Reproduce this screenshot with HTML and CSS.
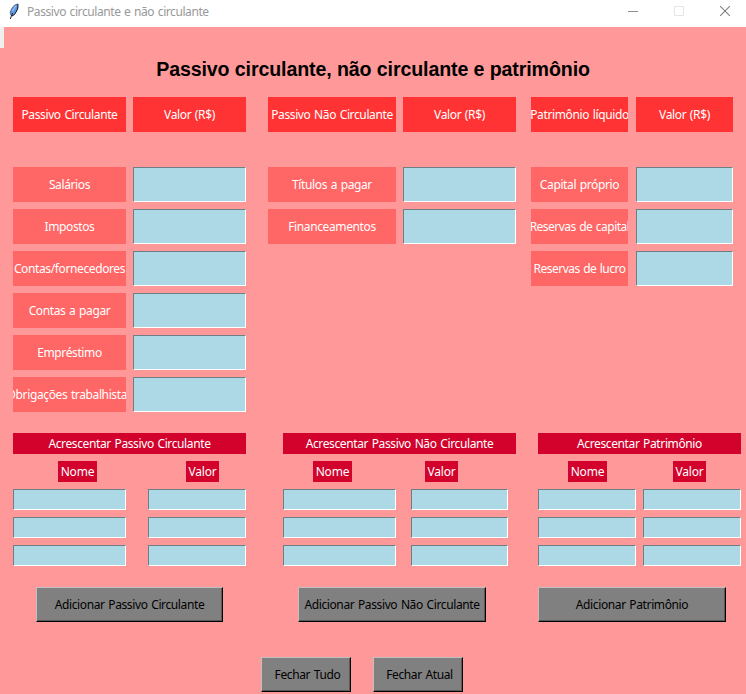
FILE: index.html
```html
<!DOCTYPE html>
<html lang="pt-BR">
<head>
<meta charset="utf-8">
<title>Passivo circulante e não circulante</title>
<link rel="stylesheet" href="styles.css">
</head>
<body>
<header class="titlebar">
  <svg class="feather" width="12" height="18" viewBox="0 0 12 18">
    <path d="M2.500 13.500L2.200 10L4 6L6.500 3.200L9.800 1.800L9.800 6L8.600 9L6.500 12.500L4 14Z" fill="#5b9be8"/>
    <path d="M2.500 12.500L2.200 10L4 6L6.500 3.200L9.800 1.800" fill="none" stroke="#555d68" stroke-width=".8"/>
    <path d="M9.900 2V6L8.600 9L6.500 12.500L4 14" fill="none" stroke="#080c14" stroke-width="1"/>
    <path d="M4.500 11L2.300 17" fill="none" stroke="#111" stroke-width=".9"/>
    <path d="M4.500 9L7.800 4" stroke="#a8ccff" stroke-width="1"/>
  </svg>
  <span class="window-title">Passivo circulante e não circulante</span>
  <div class="controls">
    <svg width="11" height="10" viewBox="0 0 11 10"><path d="M1 5.500H11" stroke="#8e8e8e"/></svg>
    <svg width="10" height="10" viewBox="0 0 10 10"><path d="M.5 .5H9.500V9.500H.5Z" fill="none" stroke="#e5e5e5"/></svg>
    <svg width="10" height="10" viewBox="0 0 10 10"><path d="M0 0L10 10M10 0L0 10" stroke="#808080" stroke-width="1.100"/></svg>
  </div>
</header>
<main class="window">
  <div class="menu-stub"></div>
  <h1>Passivo circulante, não circulante e patrimônio</h1>

  <div class="accounts">
    <section class="table current">
      <div class="head"><span>Passivo Circulante</span></div><div class="head"><span>Valor (R$)</span></div>
      <div class="label"><span>Salários</span></div><input class="field">
      <div class="label"><span>Impostos</span></div><input class="field">
      <div class="label"><span>Contas/fornecedores</span></div><input class="field">
      <div class="label"><span>Contas a pagar</span></div><input class="field">
      <div class="label"><span>Empréstimo</span></div><input class="field">
      <div class="label"><span>Obrigações trabalhistas</span></div><input class="field">
    </section>
    <section class="table noncurrent">
      <div class="head"><span>Passivo Não Circulante</span></div><div class="head"><span>Valor (R$)</span></div>
      <div class="label"><span>Títulos a pagar</span></div><input class="field">
      <div class="label"><span>Financeamentos</span></div><input class="field">
    </section>
    <section class="table equity">
      <div class="head"><span>Patrimônio líquido</span></div><div class="head"><span>Valor (R$)</span></div>
      <div class="label"><span>Capital próprio</span></div><input class="field">
      <div class="label tight"><span>Reservas de capital</span></div><input class="field">
      <div class="label tight"><span>Reservas de lucro</span></div><input class="field">
    </section>
  </div>

  <div class="additions">
    <section class="extra extra-current">
      <h2>Acrescentar Passivo Circulante</h2>
      <div class="tags"><span class="tag">Nome</span><span class="tag">Valor</span></div>
      <div class="entries">
        <input class="field"><input class="field">
        <input class="field"><input class="field">
        <input class="field"><input class="field">
      </div>
      <button class="btn add">Adicionar Passivo Circulante</button>
    </section>
    <section class="extra extra-noncurrent">
      <h2>Acrescentar Passivo Não Circulante</h2>
      <div class="tags"><span class="tag">Nome</span><span class="tag">Valor</span></div>
      <div class="entries">
        <input class="field"><input class="field">
        <input class="field"><input class="field">
        <input class="field"><input class="field">
      </div>
      <button class="btn add">Adicionar Passivo Não Circulante</button>
    </section>
    <section class="extra extra-equity">
      <h2>Acrescentar Patrimônio</h2>
      <div class="tags"><span class="tag">Nome</span><span class="tag">Valor</span></div>
      <div class="entries">
        <input class="field"><input class="field">
        <input class="field"><input class="field">
        <input class="field"><input class="field">
      </div>
      <button class="btn add">Adicionar Patrimônio</button>
    </section>
  </div>

  <footer class="actions">
    <button class="btn close">Fechar Tudo</button>
    <button class="btn close">Fechar Atual</button>
  </footer>
</main>
</body>
</html>
```
FILE: styles.css
```css
* { box-sizing: border-box; }
body {
  margin: 0;
  width: 746px;
  height: 694px;
  overflow: hidden;
  background: #ff9999;
  font: 12px/16px "Noto Sans", "Open Sans", sans-serif;
  letter-spacing: -0.38px;
  word-spacing: 0.9px;
}
.titlebar {
  display: flex;
  align-items: center;
  height: 27px;
  padding: 0 16px 5px 8px;
  background: #fff;
  color: #999;
}
.window-title { padding-top: 2px; letter-spacing: -0.42px; }
.feather { margin-right: 7px; }
.controls { display: flex; gap: 36px; margin-left: auto; }
.controls svg { display: block; }
.window { position: relative; height: 667px; padding-top: 30px; }
.menu-stub { position: absolute; left: 0; top: 0; width: 4px; height: 21px; background: #f0f0f0; }
h1 {
  margin: 0;
  height: 24px;
  text-align: center;
  font: bold 19.6px/24px "Liberation Sans", Arial, sans-serif;
  letter-spacing: -0.11px;
  word-spacing: 0;
}
.accounts {
  display: flex;
  align-items: flex-start;
  height: 336px;
  padding: 16px 0 0 13px;
}
.table { display: grid; grid-template-rows: 63px; grid-auto-rows: 35px; gap: 7px; }
.current { grid-template-columns: 113px 113px; }
.noncurrent { grid-template-columns: 128px 113px; margin-left: 22px; }
.equity { grid-template-columns: 97px 97px; column-gap: 8px; margin-left: 15px; }
.head, .label {
  display: flex;
  align-items: center;
  justify-content: center;
  height: 35px;
  overflow: hidden;
  white-space: nowrap;
  color: #fff;
}
.head { background: #ff3333; }
.label { background: #ff6666; }
.tight { letter-spacing: -0.52px; }
.field {
  display: block;
  width: 100%;
  height: 100%;
  min-width: 0;
  margin: 0;
  padding: 0 2px;
  border: 1px solid;
  border-color: #6b7f85 #fff #fff #6b7f85;
  border-radius: 0;
  background: #add8e6;
  font: inherit;
}
.additions { display: flex; align-items: flex-start; padding: 16px 0 0 13px; }
.extra { display: flex; flex-direction: column; width: 233px; }
.extra-noncurrent { margin-left: 37px; }
.extra-equity { width: 203px; margin-left: 22px; }
h2 {
  margin: 0;
  height: 21px;
  background: #d2022d;
  color: #fff;
  text-align: center;
  font: inherit;
  line-height: 21px;
}
.tags { display: flex; margin: 7px 0; }
.tag {
  width: 39px;
  height: 21px;
  background: #d2022d;
  color: #fff;
  text-align: center;
  line-height: 21px;
  letter-spacing: -0.2px;
}
.tag + .tag { width: 33px; }
.extra-current .tags { padding-left: 45px; gap: 89px; }
.extra-noncurrent .tags { padding-left: 30px; gap: 73px; }
.extra-equity .tags { padding-left: 30px; gap: 66px; }
.entries { display: grid; grid-template-rows: repeat(3, 21px); row-gap: 7px; }
.extra-current .entries { grid-template-columns: 113px 98px; column-gap: 22px; }
.extra-noncurrent .entries { grid-template-columns: 113px 97px; column-gap: 15px; }
.extra-equity .entries { grid-template-columns: 98px 98px; column-gap: 7px; }
.btn {
  height: 35px;
  padding: 0;
  border: 1px solid;
  border-color: #c0c0c0 #000 #000 #c0c0c0;
  border-radius: 0;
  background: #808080;
  box-shadow: inset -1px -1px #585858;
  color: #000;
  font: inherit;
  letter-spacing: inherit;
  word-spacing: inherit;
  white-space: nowrap;
}
.add { width: 188px; margin: 21px 0 0 15px; }
.extra-current .add { width: 187px; margin-left: 23px; }
.extra-equity .add { margin-left: 0; }
.actions { display: flex; gap: 22px; padding: 35px 0 0 261px; }
.close { width: 90px; padding-left: 3px; }
```
